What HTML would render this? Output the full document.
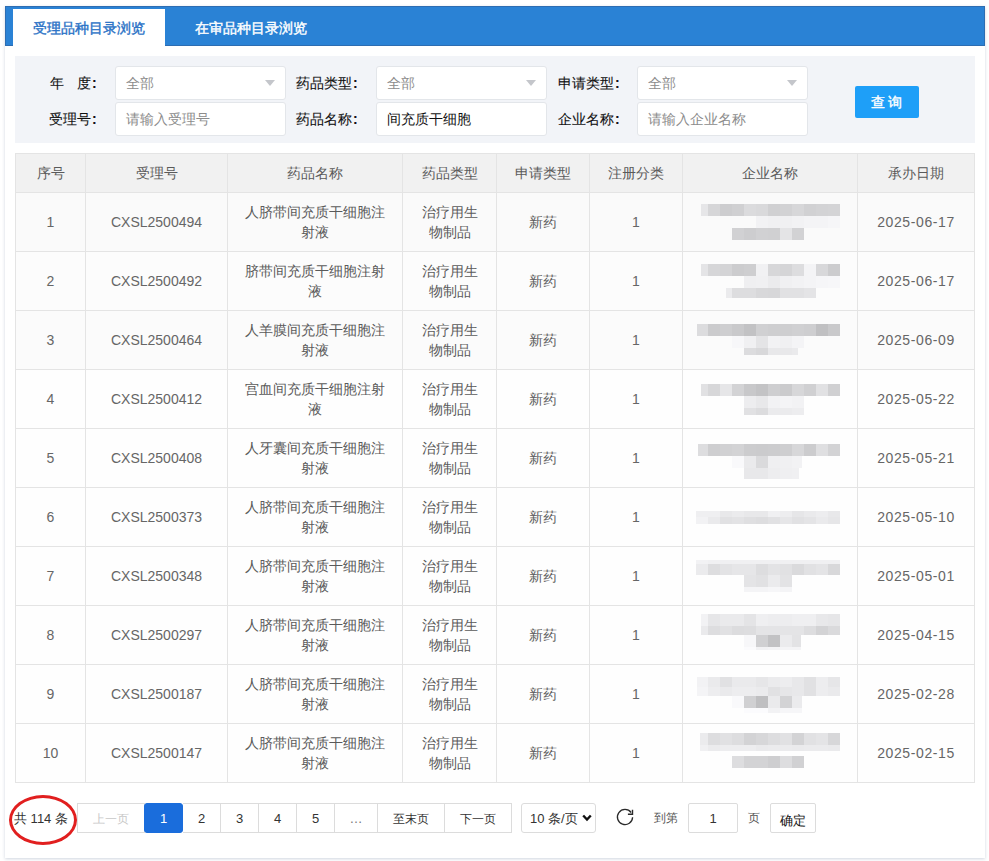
<!DOCTYPE html>
<html><head><meta charset="utf-8">
<style>
*{box-sizing:border-box;margin:0;padding:0}
html,body{width:989px;height:861px;overflow:hidden}
body{background:#fff;font-family:"Liberation Sans",sans-serif;font-size:14px;color:#333;position:relative}
.panel{position:absolute;left:5px;top:6px;width:980px;height:852px;background:#fff;box-shadow:0 1px 3px rgba(40,70,110,.22)}
.tabbar{position:absolute;left:5px;top:6px;width:980px;height:40px;background:#2a82d5;border:1px solid #2d6db2}
.tab1{position:absolute;left:13px;top:9px;width:152px;height:37px;background:#fff;color:#2a72c6;line-height:39px;padding-left:20px;-webkit-text-stroke:0.4px #2a72c6}
.tab2{position:absolute;left:195px;top:9px;height:37px;line-height:39px;color:#fff;-webkit-text-stroke:0.4px #fff}
.filter{position:absolute;left:15px;top:56px;width:960px;height:87px;background:#f2f4f8}
.lbl{position:absolute;color:#111;line-height:20px;-webkit-text-stroke:0.1px #111}
.lbl b{margin-left:1px;font-weight:bold}
.inp{position:absolute;width:171px;height:34px;background:#fff;border:1px solid #e3e6ea;border-radius:3px;line-height:32px;padding-left:10px;color:#8c8c8c}
.tri{position:absolute;right:10px;top:13px;width:0;height:0;border-left:5.5px solid transparent;border-right:5.5px solid transparent;border-top:6px solid #c4c6cb}
.btn{position:absolute;left:855px;top:86px;width:64px;height:32px;background:#1e9ff8;border-radius:2px;color:#fff;text-align:center;line-height:32px;letter-spacing:3px;text-indent:2px;-webkit-text-stroke:0.4px #fff}
table{position:absolute;left:15px;top:153px;border-collapse:collapse;table-layout:fixed;width:959px}
td,th{border:1px solid #e4e4e4;text-align:center;color:#5a5a5a;font-weight:normal;line-height:20px;vertical-align:middle}
th{background:#f1f1f1;height:39px}
td{height:59px}
i{position:absolute;display:block}
td.n{color:#666}
.pg{position:absolute;top:803px;height:30px;border:1px solid #dcdcdc;background:#fff;font-size:12px;line-height:30px;text-align:center;color:#333}
.pgn{font-size:13px}
.ell{position:absolute;left:9px;top:795px;width:68px;height:50px;border:3px solid #e11f1f;border-radius:50%}
</style></head><body>
<div class="panel"></div>
<div class="tabbar"></div>
<div class="tab1">受理品种目录浏览</div>
<div class="tab2">在审品种目录浏览</div>
<div class="filter"></div>
<div class="lbl" style="left:50px;top:73px">年</div><div class="lbl" style="left:77px;top:73px">度<b>:</b></div>
<div class="inp" style="left:115px;top:66px">全部<span class="tri"></span></div>
<div class="lbl" style="left:296px;top:73px">药品类型<b>:</b></div>
<div class="inp" style="left:376px;top:66px">全部<span class="tri"></span></div>
<div class="lbl" style="left:558px;top:73px">申请类型<b>:</b></div>
<div class="inp" style="left:637px;top:66px">全部<span class="tri"></span></div>
<div class="lbl" style="left:49px;top:109px">受理号<b>:</b></div>
<div class="inp" style="left:115px;top:102px">请输入受理号</div>
<div class="lbl" style="left:296px;top:109px">药品名称<b>:</b></div>
<div class="inp" style="left:376px;top:102px;color:#111">间充质干细胞</div>
<div class="lbl" style="left:558px;top:109px">企业名称<b>:</b></div>
<div class="inp" style="left:637px;top:102px">请输入企业名称</div>
<div class="btn">查询</div>
<table>
<colgroup><col style="width:70px"><col style="width:142px"><col style="width:175px"><col style="width:94px"><col style="width:93px"><col style="width:93px"><col style="width:175px"><col style="width:117px"></colgroup>
<tr><th>序号</th><th>受理号</th><th>药品名称</th><th>药品类型</th><th>申请类型</th><th>注册分类</th><th>企业名称</th><th>承办日期</th></tr>
<tr style="background:#fafafa"><td class="n">1</td><td class="n">CXSL2500494</td><td>人脐带间充质干细胞注<br>射液</td><td>治疗用生<br>物制品</td><td>新药</td><td class="n">1</td><td></td><td class="n" style="letter-spacing:0.6px">2025-06-17</td></tr>
<tr style="background:#fcfcfc"><td class="n">2</td><td class="n">CXSL2500492</td><td>脐带间充质干细胞注射<br>液</td><td>治疗用生<br>物制品</td><td>新药</td><td class="n">1</td><td></td><td class="n" style="letter-spacing:0.6px">2025-06-17</td></tr>
<tr style="background:#fbfbfb"><td class="n">3</td><td class="n">CXSL2500464</td><td>人羊膜间充质干细胞注<br>射液</td><td>治疗用生<br>物制品</td><td>新药</td><td class="n">1</td><td></td><td class="n" style="letter-spacing:0.6px">2025-06-09</td></tr>
<tr style="background:#fefefe"><td class="n">4</td><td class="n">CXSL2500412</td><td>宫血间充质干细胞注射<br>液</td><td>治疗用生<br>物制品</td><td>新药</td><td class="n">1</td><td></td><td class="n" style="letter-spacing:0.6px">2025-05-22</td></tr>
<tr style="background:#fefefe"><td class="n">5</td><td class="n">CXSL2500408</td><td>人牙囊间充质干细胞注<br>射液</td><td>治疗用生<br>物制品</td><td>新药</td><td class="n">1</td><td></td><td class="n" style="letter-spacing:0.6px">2025-05-21</td></tr>
<tr style="background:#fefefe"><td class="n">6</td><td class="n">CXSL2500373</td><td>人脐带间充质干细胞注<br>射液</td><td>治疗用生<br>物制品</td><td>新药</td><td class="n">1</td><td></td><td class="n" style="letter-spacing:0.6px">2025-05-10</td></tr>
<tr style="background:#fefefe"><td class="n">7</td><td class="n">CXSL2500348</td><td>人脐带间充质干细胞注<br>射液</td><td>治疗用生<br>物制品</td><td>新药</td><td class="n">1</td><td></td><td class="n" style="letter-spacing:0.6px">2025-05-01</td></tr>
<tr style="background:#fefefe"><td class="n">8</td><td class="n">CXSL2500297</td><td>人脐带间充质干细胞注<br>射液</td><td>治疗用生<br>物制品</td><td>新药</td><td class="n">1</td><td></td><td class="n" style="letter-spacing:0.6px">2025-04-15</td></tr>
<tr style="background:#fefefe"><td class="n">9</td><td class="n">CXSL2500187</td><td>人脐带间充质干细胞注<br>射液</td><td>治疗用生<br>物制品</td><td>新药</td><td class="n">1</td><td></td><td class="n" style="letter-spacing:0.6px">2025-02-28</td></tr>
<tr style="background:#fefefe"><td class="n">10</td><td class="n">CXSL2500147</td><td>人脐带间充质干细胞注<br>射液</td><td>治疗用生<br>物制品</td><td>新药</td><td class="n">1</td><td></td><td class="n" style="letter-spacing:0.6px">2025-02-15</td></tr>

</table>
<i style="left:701px;top:204px;width:7px;height:12px;background:#e6e6e8"></i>
<i style="left:708px;top:204px;width:12px;height:12px;background:#d6d6d8"></i>
<i style="left:720px;top:204px;width:12px;height:12px;background:#cdcdcf"></i>
<i style="left:732px;top:204px;width:12px;height:12px;background:#d0d0d2"></i>
<i style="left:744px;top:204px;width:12px;height:12px;background:#dbdbdd"></i>
<i style="left:756px;top:204px;width:12px;height:12px;background:#d9d9db"></i>
<i style="left:768px;top:204px;width:12px;height:12px;background:#d0d0d2"></i>
<i style="left:780px;top:204px;width:12px;height:12px;background:#d2d2d4"></i>
<i style="left:792px;top:204px;width:12px;height:12px;background:#d7d7d9"></i>
<i style="left:804px;top:204px;width:12px;height:12px;background:#d1d1d3"></i>
<i style="left:816px;top:204px;width:12px;height:12px;background:#d3d3d5"></i>
<i style="left:828px;top:204px;width:12px;height:12px;background:#d4d4d6"></i>
<i style="left:756px;top:216px;width:12px;height:12px;background:#f2f2f4"></i>
<i style="left:768px;top:216px;width:12px;height:12px;background:#f0f0f2"></i>
<i style="left:780px;top:216px;width:12px;height:12px;background:#f0f0f2"></i>
<i style="left:792px;top:216px;width:12px;height:12px;background:#f2f2f4"></i>
<i style="left:804px;top:216px;width:12px;height:12px;background:#f4f4f6"></i>
<i style="left:816px;top:216px;width:12px;height:12px;background:#f4f4f6"></i>
<i style="left:828px;top:216px;width:12px;height:12px;background:#f6f6f8"></i>
<i style="left:732px;top:228px;width:12px;height:12px;background:#d1d1d3"></i>
<i style="left:744px;top:228px;width:12px;height:12px;background:#cdcdcf"></i>
<i style="left:756px;top:228px;width:12px;height:12px;background:#d1d1d3"></i>
<i style="left:768px;top:228px;width:12px;height:12px;background:#d0d0d2"></i>
<i style="left:780px;top:228px;width:12px;height:12px;background:#e4e4e6"></i>
<i style="left:792px;top:228px;width:12px;height:12px;background:#d2d2d4"></i>
<i style="left:701px;top:264px;width:7px;height:12px;background:#e4e4e6"></i>
<i style="left:708px;top:264px;width:12px;height:12px;background:#d6d6d8"></i>
<i style="left:720px;top:264px;width:12px;height:12px;background:#d4d4d6"></i>
<i style="left:732px;top:264px;width:12px;height:12px;background:#ccccce"></i>
<i style="left:744px;top:264px;width:12px;height:12px;background:#ceced0"></i>
<i style="left:756px;top:264px;width:12px;height:12px;background:#f1f1f3"></i>
<i style="left:768px;top:264px;width:12px;height:12px;background:#d7d7d9"></i>
<i style="left:780px;top:264px;width:12px;height:12px;background:#d5d5d7"></i>
<i style="left:792px;top:264px;width:12px;height:12px;background:#dddddf"></i>
<i style="left:804px;top:264px;width:12px;height:12px;background:#f4f4f6"></i>
<i style="left:816px;top:264px;width:12px;height:12px;background:#d8d8da"></i>
<i style="left:828px;top:264px;width:12px;height:12px;background:#ccccce"></i>
<i style="left:744px;top:276px;width:12px;height:12px;background:#efeff1"></i>
<i style="left:756px;top:276px;width:12px;height:12px;background:#f0f0f2"></i>
<i style="left:768px;top:276px;width:12px;height:12px;background:#ebebed"></i>
<i style="left:780px;top:276px;width:12px;height:12px;background:#f0f0f2"></i>
<i style="left:792px;top:276px;width:12px;height:12px;background:#f2f2f4"></i>
<i style="left:804px;top:276px;width:12px;height:12px;background:#f4f4f6"></i>
<i style="left:816px;top:276px;width:12px;height:12px;background:#f6f6f8"></i>
<i style="left:828px;top:276px;width:12px;height:12px;background:#f7f7f9"></i>
<i style="left:726px;top:288px;width:6px;height:10px;background:#ebebed"></i>
<i style="left:732px;top:288px;width:12px;height:10px;background:#dddddf"></i>
<i style="left:744px;top:288px;width:12px;height:10px;background:#dddddf"></i>
<i style="left:756px;top:288px;width:12px;height:10px;background:#d8d8da"></i>
<i style="left:768px;top:288px;width:12px;height:10px;background:#d7d7d9"></i>
<i style="left:780px;top:288px;width:12px;height:10px;background:#e1e1e3"></i>
<i style="left:792px;top:288px;width:12px;height:10px;background:#e1e1e3"></i>
<i style="left:804px;top:288px;width:12px;height:10px;background:#e4e4e6"></i>
<i style="left:697px;top:324px;width:11px;height:12px;background:#dcdcde"></i>
<i style="left:708px;top:324px;width:12px;height:12px;background:#cbcbcd"></i>
<i style="left:720px;top:324px;width:12px;height:12px;background:#ceced0"></i>
<i style="left:732px;top:324px;width:12px;height:12px;background:#c9c9cb"></i>
<i style="left:744px;top:324px;width:12px;height:12px;background:#c2c2c4"></i>
<i style="left:756px;top:324px;width:12px;height:12px;background:#d0d0d2"></i>
<i style="left:768px;top:324px;width:12px;height:12px;background:#ceced0"></i>
<i style="left:780px;top:324px;width:12px;height:12px;background:#ceced0"></i>
<i style="left:792px;top:324px;width:12px;height:12px;background:#d0d0d2"></i>
<i style="left:804px;top:324px;width:12px;height:12px;background:#ceced0"></i>
<i style="left:816px;top:324px;width:12px;height:12px;background:#c0c0c2"></i>
<i style="left:828px;top:324px;width:12px;height:12px;background:#c9c9cb"></i>
<i style="left:732px;top:336px;width:12px;height:12px;background:#f7f7f9"></i>
<i style="left:744px;top:336px;width:12px;height:12px;background:#f0f0f2"></i>
<i style="left:756px;top:336px;width:12px;height:12px;background:#e4e4e6"></i>
<i style="left:768px;top:336px;width:12px;height:12px;background:#f2f2f4"></i>
<i style="left:780px;top:336px;width:12px;height:12px;background:#f0f0f2"></i>
<i style="left:792px;top:336px;width:12px;height:12px;background:#f4f4f6"></i>
<i style="left:744px;top:348px;width:12px;height:7px;background:#dcdcde"></i>
<i style="left:756px;top:348px;width:12px;height:7px;background:#d8d8da"></i>
<i style="left:768px;top:348px;width:12px;height:7px;background:#e8e8ea"></i>
<i style="left:780px;top:348px;width:12px;height:7px;background:#e8e8ea"></i>
<i style="left:792px;top:348px;width:6px;height:7px;background:#eaeaec"></i>
<i style="left:701px;top:384px;width:7px;height:12px;background:#e1e1e3"></i>
<i style="left:708px;top:384px;width:12px;height:12px;background:#d7d7d9"></i>
<i style="left:720px;top:384px;width:12px;height:12px;background:#e6e6e8"></i>
<i style="left:732px;top:384px;width:12px;height:12px;background:#d3d3d5"></i>
<i style="left:744px;top:384px;width:12px;height:12px;background:#c8c8ca"></i>
<i style="left:756px;top:384px;width:12px;height:12px;background:#c3c3c5"></i>
<i style="left:768px;top:384px;width:12px;height:12px;background:#ceced0"></i>
<i style="left:780px;top:384px;width:12px;height:12px;background:#cbcbcd"></i>
<i style="left:792px;top:384px;width:12px;height:12px;background:#d7d7d9"></i>
<i style="left:804px;top:384px;width:12px;height:12px;background:#d0d0d2"></i>
<i style="left:816px;top:384px;width:12px;height:12px;background:#e1e1e3"></i>
<i style="left:828px;top:384px;width:12px;height:12px;background:#d0d0d2"></i>
<i style="left:744px;top:396px;width:12px;height:12px;background:#ededef"></i>
<i style="left:756px;top:396px;width:12px;height:12px;background:#e8e8ea"></i>
<i style="left:768px;top:396px;width:12px;height:12px;background:#f2f2f4"></i>
<i style="left:780px;top:396px;width:12px;height:12px;background:#f4f4f6"></i>
<i style="left:792px;top:396px;width:12px;height:12px;background:#f2f2f4"></i>
<i style="left:744px;top:408px;width:12px;height:7px;background:#e1e1e3"></i>
<i style="left:756px;top:408px;width:12px;height:7px;background:#dcdcde"></i>
<i style="left:768px;top:408px;width:12px;height:7px;background:#ebebed"></i>
<i style="left:780px;top:408px;width:12px;height:7px;background:#ebebed"></i>
<i style="left:792px;top:408px;width:12px;height:7px;background:#ededef"></i>
<i style="left:698px;top:444px;width:10px;height:12px;background:#dddddf"></i>
<i style="left:708px;top:444px;width:12px;height:12px;background:#ceced0"></i>
<i style="left:720px;top:444px;width:12px;height:12px;background:#d1d1d3"></i>
<i style="left:732px;top:444px;width:12px;height:12px;background:#d3d3d5"></i>
<i style="left:744px;top:444px;width:12px;height:12px;background:#ccccce"></i>
<i style="left:756px;top:444px;width:12px;height:12px;background:#cbcbcd"></i>
<i style="left:768px;top:444px;width:12px;height:12px;background:#ccccce"></i>
<i style="left:780px;top:444px;width:12px;height:12px;background:#ceced0"></i>
<i style="left:792px;top:444px;width:12px;height:12px;background:#d7d7d9"></i>
<i style="left:804px;top:444px;width:12px;height:12px;background:#ccccce"></i>
<i style="left:816px;top:444px;width:12px;height:12px;background:#dfdfe1"></i>
<i style="left:828px;top:444px;width:12px;height:12px;background:#d3d3d5"></i>
<i style="left:732px;top:456px;width:12px;height:12px;background:#f9f9fb"></i>
<i style="left:744px;top:456px;width:12px;height:12px;background:#eaeaec"></i>
<i style="left:756px;top:456px;width:12px;height:12px;background:#dadadc"></i>
<i style="left:768px;top:456px;width:12px;height:12px;background:#efeff1"></i>
<i style="left:780px;top:456px;width:12px;height:12px;background:#f0f0f2"></i>
<i style="left:792px;top:456px;width:10px;height:12px;background:#f2f2f4"></i>
<i style="left:744px;top:468px;width:12px;height:11px;background:#e8e8ea"></i>
<i style="left:756px;top:468px;width:12px;height:11px;background:#e8e8ea"></i>
<i style="left:768px;top:468px;width:12px;height:11px;background:#ededef"></i>
<i style="left:780px;top:468px;width:12px;height:11px;background:#efeff1"></i>
<i style="left:792px;top:468px;width:7px;height:11px;background:#f0f0f2"></i>
<i style="left:696px;top:511px;width:12px;height:6px;background:#efeff1"></i>
<i style="left:708px;top:511px;width:12px;height:6px;background:#efeff1"></i>
<i style="left:720px;top:511px;width:12px;height:6px;background:#e8e8ea"></i>
<i style="left:732px;top:511px;width:12px;height:6px;background:#ebebed"></i>
<i style="left:744px;top:511px;width:12px;height:6px;background:#e8e8ea"></i>
<i style="left:756px;top:511px;width:12px;height:6px;background:#e8e8ea"></i>
<i style="left:768px;top:511px;width:12px;height:6px;background:#f0f0f2"></i>
<i style="left:780px;top:511px;width:12px;height:6px;background:#ededef"></i>
<i style="left:792px;top:511px;width:12px;height:6px;background:#e6e6e8"></i>
<i style="left:804px;top:511px;width:12px;height:6px;background:#eaeaec"></i>
<i style="left:816px;top:511px;width:12px;height:6px;background:#ededef"></i>
<i style="left:828px;top:511px;width:12px;height:6px;background:#e8e8ea"></i>
<i style="left:696px;top:517px;width:12px;height:7px;background:#f2f2f4"></i>
<i style="left:708px;top:517px;width:12px;height:7px;background:#eaeaec"></i>
<i style="left:720px;top:517px;width:12px;height:7px;background:#e1e1e3"></i>
<i style="left:732px;top:517px;width:12px;height:7px;background:#e3e3e5"></i>
<i style="left:744px;top:517px;width:12px;height:7px;background:#dfdfe1"></i>
<i style="left:756px;top:517px;width:12px;height:7px;background:#dddddf"></i>
<i style="left:768px;top:517px;width:12px;height:7px;background:#e1e1e3"></i>
<i style="left:780px;top:517px;width:12px;height:7px;background:#e6e6e8"></i>
<i style="left:792px;top:517px;width:12px;height:7px;background:#e1e1e3"></i>
<i style="left:804px;top:517px;width:12px;height:7px;background:#e4e4e6"></i>
<i style="left:816px;top:517px;width:12px;height:7px;background:#eaeaec"></i>
<i style="left:828px;top:517px;width:12px;height:7px;background:#e6e6e8"></i>
<i style="left:696px;top:560px;width:12px;height:4px;background:#f2f2f4"></i>
<i style="left:708px;top:560px;width:12px;height:4px;background:#f0f0f2"></i>
<i style="left:720px;top:560px;width:12px;height:4px;background:#f0f0f2"></i>
<i style="left:732px;top:560px;width:12px;height:4px;background:#f0f0f2"></i>
<i style="left:744px;top:560px;width:12px;height:4px;background:#f0f0f2"></i>
<i style="left:756px;top:560px;width:12px;height:4px;background:#f0f0f2"></i>
<i style="left:768px;top:560px;width:12px;height:4px;background:#f0f0f2"></i>
<i style="left:780px;top:560px;width:12px;height:4px;background:#f0f0f2"></i>
<i style="left:792px;top:560px;width:12px;height:4px;background:#f0f0f2"></i>
<i style="left:804px;top:560px;width:12px;height:4px;background:#f0f0f2"></i>
<i style="left:816px;top:560px;width:12px;height:4px;background:#f0f0f2"></i>
<i style="left:828px;top:560px;width:12px;height:4px;background:#f0f0f2"></i>
<i style="left:696px;top:564px;width:12px;height:11px;background:#ebebed"></i>
<i style="left:708px;top:564px;width:12px;height:11px;background:#dddddf"></i>
<i style="left:720px;top:564px;width:12px;height:11px;background:#e3e3e5"></i>
<i style="left:732px;top:564px;width:12px;height:11px;background:#e6e6e8"></i>
<i style="left:744px;top:564px;width:12px;height:11px;background:#e6e6e8"></i>
<i style="left:756px;top:564px;width:12px;height:11px;background:#dddddf"></i>
<i style="left:768px;top:564px;width:12px;height:11px;background:#e3e3e5"></i>
<i style="left:780px;top:564px;width:12px;height:11px;background:#e1e1e3"></i>
<i style="left:792px;top:564px;width:12px;height:11px;background:#dadadc"></i>
<i style="left:804px;top:564px;width:12px;height:11px;background:#e1e1e3"></i>
<i style="left:816px;top:564px;width:12px;height:11px;background:#e4e4e6"></i>
<i style="left:828px;top:564px;width:12px;height:11px;background:#d8d8da"></i>
<i style="left:744px;top:575px;width:12px;height:12px;background:#e4e4e6"></i>
<i style="left:756px;top:575px;width:12px;height:12px;background:#e1e1e3"></i>
<i style="left:768px;top:575px;width:12px;height:12px;background:#ebebed"></i>
<i style="left:780px;top:575px;width:12px;height:12px;background:#e3e3e5"></i>
<i style="left:744px;top:587px;width:12px;height:5px;background:#f4f4f6"></i>
<i style="left:756px;top:587px;width:12px;height:5px;background:#f4f4f6"></i>
<i style="left:768px;top:587px;width:12px;height:5px;background:#f6f6f8"></i>
<i style="left:780px;top:587px;width:12px;height:5px;background:#f4f4f6"></i>
<i style="left:701px;top:614px;width:7px;height:12px;background:#f2f2f4"></i>
<i style="left:708px;top:614px;width:12px;height:12px;background:#e6e6e8"></i>
<i style="left:720px;top:614px;width:12px;height:12px;background:#eaeaec"></i>
<i style="left:732px;top:614px;width:12px;height:12px;background:#eaeaec"></i>
<i style="left:744px;top:614px;width:12px;height:12px;background:#e4e4e6"></i>
<i style="left:756px;top:614px;width:12px;height:12px;background:#efeff1"></i>
<i style="left:768px;top:614px;width:12px;height:12px;background:#ededef"></i>
<i style="left:780px;top:614px;width:12px;height:12px;background:#ededef"></i>
<i style="left:792px;top:614px;width:12px;height:12px;background:#efeff1"></i>
<i style="left:804px;top:614px;width:12px;height:12px;background:#efeff1"></i>
<i style="left:816px;top:614px;width:12px;height:12px;background:#e8e8ea"></i>
<i style="left:828px;top:614px;width:12px;height:12px;background:#e6e6e8"></i>
<i style="left:701px;top:626px;width:7px;height:9px;background:#eaeaec"></i>
<i style="left:708px;top:626px;width:12px;height:9px;background:#dddddf"></i>
<i style="left:720px;top:626px;width:12px;height:9px;background:#e1e1e3"></i>
<i style="left:732px;top:626px;width:12px;height:9px;background:#dcdcde"></i>
<i style="left:744px;top:626px;width:12px;height:9px;background:#dddddf"></i>
<i style="left:756px;top:626px;width:12px;height:9px;background:#e4e4e6"></i>
<i style="left:768px;top:626px;width:12px;height:9px;background:#e4e4e6"></i>
<i style="left:780px;top:626px;width:12px;height:9px;background:#e4e4e6"></i>
<i style="left:792px;top:626px;width:12px;height:9px;background:#e4e4e6"></i>
<i style="left:804px;top:626px;width:12px;height:9px;background:#dddddf"></i>
<i style="left:816px;top:626px;width:12px;height:9px;background:#d3d3d5"></i>
<i style="left:828px;top:626px;width:12px;height:9px;background:#dadadc"></i>
<i style="left:744px;top:635px;width:12px;height:12px;background:#f7f7f9"></i>
<i style="left:756px;top:635px;width:12px;height:12px;background:#d0d0d2"></i>
<i style="left:768px;top:635px;width:12px;height:12px;background:#c2c2c4"></i>
<i style="left:780px;top:635px;width:12px;height:12px;background:#ebebed"></i>
<i style="left:792px;top:635px;width:9px;height:12px;background:#e3e3e5"></i>
<i style="left:744px;top:647px;width:12px;height:3px;background:#fbfbfd"></i>
<i style="left:756px;top:647px;width:12px;height:3px;background:#f2f2f4"></i>
<i style="left:768px;top:647px;width:12px;height:3px;background:#f4f4f6"></i>
<i style="left:780px;top:647px;width:12px;height:3px;background:#f4f4f6"></i>
<i style="left:792px;top:647px;width:9px;height:3px;background:#f4f4f6"></i>
<i style="left:697px;top:677px;width:11px;height:10px;background:#f2f2f4"></i>
<i style="left:708px;top:677px;width:12px;height:10px;background:#eaeaec"></i>
<i style="left:720px;top:677px;width:12px;height:10px;background:#e1e1e3"></i>
<i style="left:732px;top:677px;width:12px;height:10px;background:#eaeaec"></i>
<i style="left:744px;top:677px;width:12px;height:10px;background:#eaeaec"></i>
<i style="left:756px;top:677px;width:12px;height:10px;background:#e6e6e8"></i>
<i style="left:768px;top:677px;width:12px;height:10px;background:#ebebed"></i>
<i style="left:780px;top:677px;width:12px;height:10px;background:#ededef"></i>
<i style="left:792px;top:677px;width:12px;height:10px;background:#e8e8ea"></i>
<i style="left:804px;top:677px;width:12px;height:10px;background:#e1e1e3"></i>
<i style="left:816px;top:677px;width:12px;height:10px;background:#ededef"></i>
<i style="left:828px;top:677px;width:12px;height:10px;background:#e6e6e8"></i>
<i style="left:697px;top:687px;width:11px;height:9px;background:#f4f4f6"></i>
<i style="left:708px;top:687px;width:12px;height:9px;background:#ededef"></i>
<i style="left:720px;top:687px;width:12px;height:9px;background:#eaeaec"></i>
<i style="left:732px;top:687px;width:12px;height:9px;background:#ededef"></i>
<i style="left:744px;top:687px;width:12px;height:9px;background:#ededef"></i>
<i style="left:756px;top:687px;width:12px;height:9px;background:#ebebed"></i>
<i style="left:768px;top:687px;width:12px;height:9px;background:#e1e1e3"></i>
<i style="left:780px;top:687px;width:12px;height:9px;background:#e6e6e8"></i>
<i style="left:792px;top:687px;width:12px;height:9px;background:#e8e8ea"></i>
<i style="left:804px;top:687px;width:12px;height:9px;background:#e1e1e3"></i>
<i style="left:816px;top:687px;width:12px;height:9px;background:#ededef"></i>
<i style="left:828px;top:687px;width:12px;height:9px;background:#eaeaec"></i>
<i style="left:732px;top:696px;width:12px;height:12px;background:#f9f9fb"></i>
<i style="left:744px;top:696px;width:12px;height:12px;background:#d0d0d2"></i>
<i style="left:756px;top:696px;width:12px;height:12px;background:#bfbfc1"></i>
<i style="left:768px;top:696px;width:12px;height:12px;background:#eaeaec"></i>
<i style="left:780px;top:696px;width:12px;height:12px;background:#d3d3d5"></i>
<i style="left:792px;top:696px;width:10px;height:12px;background:#ebebed"></i>
<i style="left:744px;top:708px;width:12px;height:5px;background:#fbfbfd"></i>
<i style="left:756px;top:708px;width:12px;height:5px;background:#fbfbfd"></i>
<i style="left:768px;top:708px;width:12px;height:5px;background:#f2f2f4"></i>
<i style="left:780px;top:708px;width:12px;height:5px;background:#f6f6f8"></i>
<i style="left:792px;top:708px;width:10px;height:5px;background:#f6f6f8"></i>
<i style="left:700px;top:733px;width:8px;height:12px;background:#ebebed"></i>
<i style="left:708px;top:733px;width:12px;height:12px;background:#dddddf"></i>
<i style="left:720px;top:733px;width:12px;height:12px;background:#e1e1e3"></i>
<i style="left:732px;top:733px;width:12px;height:12px;background:#dddddf"></i>
<i style="left:744px;top:733px;width:12px;height:12px;background:#d3d3d5"></i>
<i style="left:756px;top:733px;width:12px;height:12px;background:#d7d7d9"></i>
<i style="left:768px;top:733px;width:12px;height:12px;background:#dddddf"></i>
<i style="left:780px;top:733px;width:12px;height:12px;background:#e1e1e3"></i>
<i style="left:792px;top:733px;width:12px;height:12px;background:#d3d3d5"></i>
<i style="left:804px;top:733px;width:12px;height:12px;background:#e1e1e3"></i>
<i style="left:816px;top:733px;width:12px;height:12px;background:#e4e4e6"></i>
<i style="left:828px;top:733px;width:12px;height:12px;background:#d7d7d9"></i>
<i style="left:700px;top:745px;width:8px;height:6px;background:#f0f0f2"></i>
<i style="left:708px;top:745px;width:12px;height:6px;background:#ebebed"></i>
<i style="left:720px;top:745px;width:12px;height:6px;background:#ededef"></i>
<i style="left:732px;top:745px;width:12px;height:6px;background:#ededef"></i>
<i style="left:744px;top:745px;width:12px;height:6px;background:#ededef"></i>
<i style="left:756px;top:745px;width:12px;height:6px;background:#eaeaec"></i>
<i style="left:768px;top:745px;width:12px;height:6px;background:#ebebed"></i>
<i style="left:780px;top:745px;width:12px;height:6px;background:#ebebed"></i>
<i style="left:792px;top:745px;width:12px;height:6px;background:#eaeaec"></i>
<i style="left:804px;top:745px;width:12px;height:6px;background:#ebebed"></i>
<i style="left:816px;top:745px;width:12px;height:6px;background:#ebebed"></i>
<i style="left:828px;top:745px;width:12px;height:6px;background:#eaeaec"></i>
<i style="left:732px;top:756px;width:12px;height:12px;background:#dddddf"></i>
<i style="left:744px;top:756px;width:12px;height:12px;background:#d3d3d5"></i>
<i style="left:756px;top:756px;width:12px;height:12px;background:#d3d3d5"></i>
<i style="left:768px;top:756px;width:12px;height:12px;background:#ceced0"></i>
<i style="left:780px;top:756px;width:12px;height:12px;background:#dddddf"></i>
<i style="left:792px;top:756px;width:12px;height:12px;background:#d1d1d3"></i>
<div style="position:absolute;left:14px;top:810px;font-size:13px;line-height:18px;color:#333">共 114 条</div>
<div class="ell"></div>
<div class="pg" style="left:77px;width:68px;color:#c8c8c8">上一页</div>
<div class="pg pgn" style="left:144px;width:39px;background:#1a6ddc;border-color:#1a6ddc;color:#fff;border-radius:3px;z-index:2">1</div>
<div class="pg pgn" style="left:183px;width:38px;border-left:0">2</div>
<div class="pg pgn" style="left:221px;width:38px;border-left:0">3</div>
<div class="pg pgn" style="left:259px;width:38px;border-left:0">4</div>
<div class="pg pgn" style="left:297px;width:38px;border-left:0">5</div>
<div class="pg pgn" style="left:335px;width:43px;border-left:0;color:#777">…</div>
<div class="pg" style="left:378px;width:67px;border-left:0">至末页</div>
<div class="pg" style="left:445px;width:67px;border-left:0">下一页</div>
<div class="pg" style="left:521px;width:75px;border-radius:3px;text-align:left;padding-left:8px;font-size:13px">10 条/页</div>
<svg style="position:absolute;left:581px;top:813px" width="12" height="10" viewBox="0 0 12 10"><path d="M2.2 2.5 L6 6.5 L9.8 2.5" fill="none" stroke="#111" stroke-width="2.4"/></svg>
<svg style="position:absolute;left:610px;top:803px" width="30" height="30" viewBox="0 0 30 30"><path d="M22.6 14.3 A7.6 7.6 0 1 1 21.1 9.5" fill="none" stroke="#2a2a2a" stroke-width="1.3"/><path d="M22.5 6.8 L22.5 11.3 L17.9 11.3" fill="none" stroke="#2a2a2a" stroke-width="1.4"/></svg>
<div style="position:absolute;left:654px;top:809px;font-size:12px;line-height:18px;color:#555">到第</div>
<div class="pg pgn" style="left:688px;width:50px;border-radius:2px">1</div>
<div style="position:absolute;left:748px;top:809px;font-size:12px;line-height:18px;color:#555">页</div>
<div class="pg" style="left:770px;width:46px;border-radius:2px;line-height:33px;color:#111;font-size:13px">确定</div>
</body></html>
